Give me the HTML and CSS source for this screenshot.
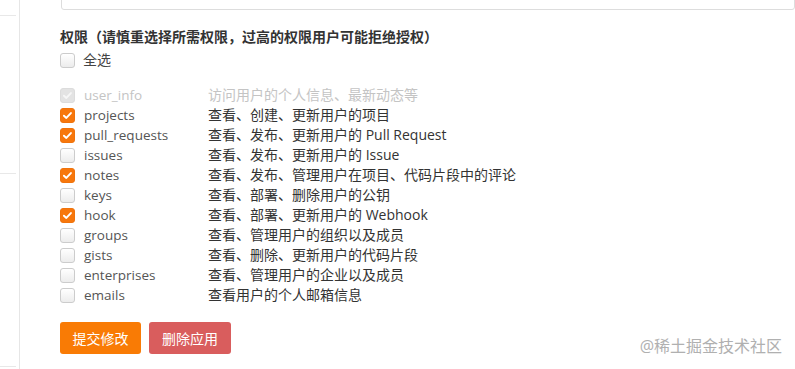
FILE: index.html
```html
<!DOCTYPE html>
<html lang="zh-CN">
<head>
  <meta charset="UTF-8" />
  <meta name="viewport" content="width=device-width, initial-scale=1.0"/>
  <title>应用权限</title>
  <link rel="stylesheet" href="styles.css">
</head>
<body>
  <aside class="side">
    <div class="side-block first"></div>
    <div class="side-block second"></div>
    <div class="side-block third"></div>
  </aside>

  <main class="content">
    <div class="field-input"></div>

    <h4 class="perm-title">权限（请慎重选择所需权限，过高的权限用户可能拒绝授权）</h4>

    <label class="check-row select-all">
      <span class="box"></span>
      <span class="name">全选</span>
    </label>

    <ul class="scopes">
      <li class="check-row disabled">
        <span class="box checked"><svg viewBox="0 0 16 16"><path d="M3.6 8.2l3 2.8 5.6-6" /></svg></span>
        <span class="name">user_info</span>
        <span class="desc">访问用户的个人信息、最新动态等</span>
      </li>
      <li class="check-row">
        <span class="box checked"><svg viewBox="0 0 16 16"><path d="M3.6 8.2l3 2.8 5.6-6" /></svg></span>
        <span class="name">projects</span>
        <span class="desc">查看、创建、更新用户的项目</span>
      </li>
      <li class="check-row">
        <span class="box checked"><svg viewBox="0 0 16 16"><path d="M3.6 8.2l3 2.8 5.6-6" /></svg></span>
        <span class="name">pull_requests</span>
        <span class="desc">查看、发布、更新用户的 Pull Request</span>
      </li>
      <li class="check-row">
        <span class="box"></span>
        <span class="name">issues</span>
        <span class="desc">查看、发布、更新用户的 Issue</span>
      </li>
      <li class="check-row">
        <span class="box checked"><svg viewBox="0 0 16 16"><path d="M3.6 8.2l3 2.8 5.6-6" /></svg></span>
        <span class="name">notes</span>
        <span class="desc">查看、发布、管理用户在项目、代码片段中的评论</span>
      </li>
      <li class="check-row">
        <span class="box"></span>
        <span class="name">keys</span>
        <span class="desc">查看、部署、删除用户的公钥</span>
      </li>
      <li class="check-row">
        <span class="box checked"><svg viewBox="0 0 16 16"><path d="M3.6 8.2l3 2.8 5.6-6" /></svg></span>
        <span class="name">hook</span>
        <span class="desc">查看、部署、更新用户的 Webhook</span>
      </li>
      <li class="check-row">
        <span class="box"></span>
        <span class="name">groups</span>
        <span class="desc">查看、管理用户的组织以及成员</span>
      </li>
      <li class="check-row">
        <span class="box"></span>
        <span class="name">gists</span>
        <span class="desc">查看、删除、更新用户的代码片段</span>
      </li>
      <li class="check-row">
        <span class="box"></span>
        <span class="name">enterprises</span>
        <span class="desc">查看、管理用户的企业以及成员</span>
      </li>
      <li class="check-row">
        <span class="box"></span>
        <span class="name">emails</span>
        <span class="desc">查看用户的个人邮箱信息</span>
      </li>
    </ul>

    <div class="actions">
      <button class="btn btn-orange">提交修改</button>
      <button class="btn btn-red">删除应用</button>
    </div>
  </main>

  <div class="watermark">@稀土掘金技术社区</div>
</body>
</html>
```

FILE: styles.css
```css
html, body {
  margin: 0;
  padding: 0;
  background: #fff;
  color: #333;
  font-family: "Segoe UI", "Open Sans", "Noto Sans CJK SC", sans-serif;
  font-size: 14px;
  overflow: hidden;
}

body {
  display: flex;
  height: 369px;
}

.side {
  width: 19px;
  border-right: 1px solid #e6e6e6;
  flex-shrink: 0;
}

.side-block {
  width: 16px;
  border-bottom: 1px solid #e8e8e8;
}

.side-block.first { height: 15px; }
.side-block.second { height: 157px; }
.side-block.third { height: 192px; }

.content {
  flex: 1;
  padding-left: 40px;
}

.field-input {
  margin: -20px 0 0 1px;
  height: 28px;
  border: 1px solid #ddd;
  border-radius: 3px;
}

.perm-title {
  margin: 17px 0 3px;
  font-size: 14px;
  line-height: 20px;
  font-weight: 600;
  color: #333;
}

.check-row {
  display: flex;
  align-items: center;
  height: 20px;
  line-height: 20px;
}

.box {
  width: 13px;
  height: 13px;
  border: 1px solid #ccc;
  border-radius: 3px;
  background: linear-gradient(#fff, #ececec);
  flex-shrink: 0;
  display: flex;
}

.box svg {
  width: 13px;
  height: 13px;
  fill: none;
  stroke: #fff;
  stroke-width: 2.4;
  stroke-linecap: round;
  stroke-linejoin: round;
}

.box.checked {
  background: #f7770c;
  border-color: #f0730c;
}

.name {
  width: 124px;
  margin-left: 9px;
  font-size: 13.5px;
  color: #555;
}

.desc {
  color: #333;
}

.select-all .name {
  margin-left: 8px;
  font-size: 14px;
  color: #444;
}

.scopes {
  list-style: none;
  margin: 15px 0 0;
  padding: 0;
}

.check-row.disabled .box {
  background: #e3e3e3;
  border-color: #dcdcdc;
}

.check-row.disabled .box svg {
  stroke: #f6f6f6;
}

.check-row.disabled .name,
.check-row.disabled .desc {
  color: #c4c4c4;
}

.actions {
  display: flex;
  gap: 8px;
  margin-top: 17px;
}

.btn {
  height: 32px;
  width: 81px;
  border: none;
  border-radius: 3px;
  color: #fff;
  font-family: inherit;
  font-size: 14px;
  padding: 0;
  cursor: pointer;
}

.btn-orange { background: #f97b05; }
.btn-red { background: #d95d5d; width: 82px; }

.watermark {
  position: absolute;
  right: 13px;
  top: 335px;
  font-size: 16px;
  line-height: 22px;
  color: #b0b0b0;
}
```
